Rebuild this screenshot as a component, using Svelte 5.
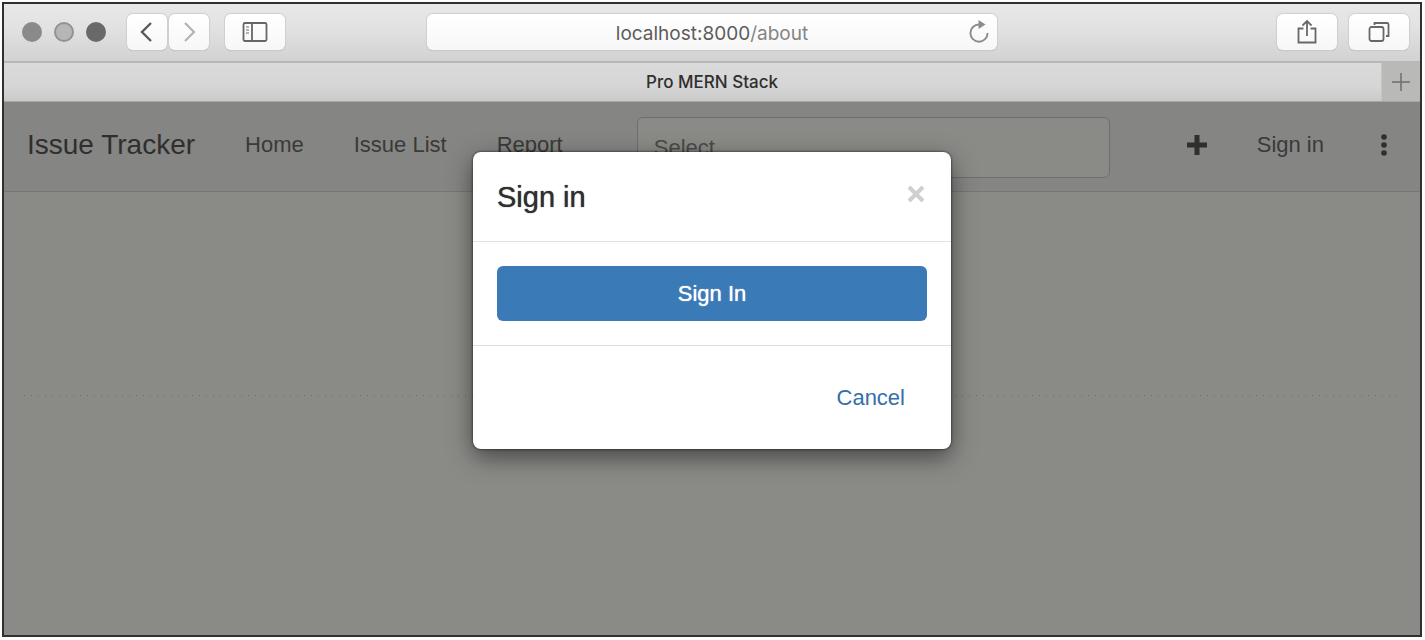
<script>
  let open = $state(true);
</script>

<div class="window">
  <header class="toolbar">
    <div class="group">
      <div class="lights"><span></span><span class="mid"></span><span class="dark"></span></div>
      <div class="history">
        <button class="tool narrow" aria-label="Back">
          <svg width="24" height="24" viewBox="0 0 24 24" stroke="#5a5a5a" stroke-width="2.4"><path d="M16 3 7 12l9 9" /></svg>
        </button>
        <button class="tool narrow" aria-label="Forward">
          <svg width="24" height="24" viewBox="0 0 24 24" stroke="#b4b4b4" stroke-width="2.2"><path d="M8 3l9 9-9 9" /></svg>
        </button>
      </div>
      <button class="tool" aria-label="Sidebar">
        <svg width="26" height="22" viewBox="0 0 26 22" stroke="#666" stroke-width="1.8"><rect x="1.5" y="2" width="23" height="18" rx="1.5" /><path d="M10 2v18" /><path d="M4 6h3M4 9h3M4 12h3" stroke="#999" stroke-width="1.3" /></svg>
      </button>
    </div>
    <div class="address">
      <span class="url">localhost:8000<span>/about</span></span>
      <button class="reload" aria-label="Reload">
        <svg width="22" height="24" viewBox="0 0 22 24" stroke="#8c8c8c" stroke-width="1.9"><path d="M12 4.500H11a8.600 8.600 0 1 0 8.600 8.600" /><path d="M10.500 0v9l7-4.500z" fill="#8c8c8c" stroke="none" /></svg>
      </button>
    </div>
    <div class="group end">
      <button class="tool" aria-label="Share">
        <svg width="22" height="28" viewBox="0 0 22 28" stroke="#686868" stroke-width="1.8"><path d="M7.500 10.500H2.500v14h17v-14h-5M11 18V3M6.500 7.500 11 3l4.500 4.500" /></svg>
      </button>
      <button class="tool" aria-label="Show all tabs">
        <svg width="24" height="24" viewBox="0 0 24 24" stroke="#686868" stroke-width="1.8"><rect x="2.500" y="7" width="14" height="14" rx="2" /><path d="M7.500 5V3H20a1.500 1.500 0 0 1 1.500 1.500V16H19" /></svg>
      </button>
    </div>
  </header>

  <div class="tabs">
    <div class="tab">Pro MERN Stack</div>
    <button class="new-tab" aria-label="New tab">
      <svg width="20" height="20" viewBox="0 0 20 20" stroke="#6e6e6e" stroke-width="1.5"><path d="M10 1v18M1 10h18" /></svg>
    </button>
  </div>

  <div class="page">
    <nav>
      <a class="brand" href="#home">Issue Tracker</a>
      <a href="#home">Home</a>
      <a href="#issues">Issue List</a>
      <a href="#report">Report</a>
      <input class="search" type="text" aria-label="Search issues" placeholder="Select..." />
      <div class="right">
        <a href="#new" aria-label="Create issue">
          <svg width="24" height="24" viewBox="0 0 24 24" stroke="#2f2f2e" stroke-width="5"><path d="M12 2v20M2 12h20" /></svg>
        </a>
        <a href="#signin">Sign in</a>
        <a href="#more" aria-label="More">
          <svg width="24" height="24" viewBox="0 0 24 24"><g fill="#2f2f2e"><circle cx="12" cy="4" r="2.8" /><circle cx="12" cy="12" r="2.8" /><circle cx="12" cy="20" r="2.8" /></g></svg>
        </a>
      </div>
    </nav>
    <hr />

    {#if open}
      <div class="overlay">
        <div class="modal" role="dialog" aria-modal="true" aria-labelledby="title">
          <div class="head">
            <h4 id="title">Sign in</h4>
            <button class="close" aria-label="Close" onclick={() => (open = false)}>
              <svg width="18" height="18" viewBox="0 0 18 18" stroke="#cfcfcf" stroke-width="4"><path d="M2 2l14 14M16 2 2 16" /></svg>
            </button>
          </div>
          <div class="body"><button class="primary">Sign In</button></div>
          <div class="foot"><button class="link" onclick={() => (open = false)}>Cancel</button></div>
        </div>
      </div>
    {/if}
  </div>
</div>

<style>
  :global(body) { margin: 0; background: #fdfdfd; }
  * { box-sizing: border-box; }
  button { padding: 0; border: 0; background: none; font: inherit; color: inherit; }
  svg { display: block; fill: none; }
  .window {
    display: flex;
    flex-direction: column;
    min-height: calc(100vh - 5px);
    margin: 2px 3px 3px 2px;
    border: 2px solid #30312f;
    font-family: "Liberation Sans", Arial, sans-serif;
    font-size: 22px;
  }
  .toolbar {
    display: grid;
    grid-template-columns: 1fr minmax(0, 570px) 1fr;
    align-items: center;
    height: 59px;
    padding: 0 11px 2px;
    border-bottom: 2px solid #b8b8b8;
    background: linear-gradient(#e8e8e8, #e2e2e2 40%, #d2d2d2);
  }
  .group { display: flex; align-items: center; gap: 16px; }
  .group.end { justify-content: flex-end; gap: 12px; }
  .lights { display: flex; gap: 12px; margin: 0 5px 0 7px; }
  .lights span { width: 20px; height: 20px; border-radius: 50%; background: #8a8a88; }
  .lights .mid { background: #b6b6b5; border: 2px solid #929290; }
  .lights .dark { background: #696968; }
  .history { display: flex; gap: 2px; }
  .tool {
    display: grid;
    place-items: center;
    width: 60px;
    height: 36px;
    border-radius: 6px;
    background: linear-gradient(#fff, #f7f7f7);
    box-shadow: 0 0 1px 1px #cfcfcf, 0 1px 1px #a8a8a8;
  }
  .narrow { width: 40px; }
  .address {
    display: grid;
    grid-template-columns: 36px 1fr 36px;
    align-items: center;
    height: 36px;
    border-radius: 6px;
    background: linear-gradient(#fff, #f7f7f7);
    box-shadow: 0 0 1px 1px #cfcfcf, 0 1px 1px #a8a8a8;
    font-family: Inter, sans-serif;
    font-size: 19px;
    color: #5c5c5c;
  }
  .url { grid-column: 2; padding-top: 4px; text-align: center; }
  .url span { color: #858585; }
  .reload { display: grid; place-items: center; }
  .tabs {
    display: flex;
    height: 39px;
    border-bottom: 1px solid #a6a6a5;
    background: linear-gradient(#dadada, #d6d6d6 60%, #cacaca);
    font-family: Inter, sans-serif;
    font-size: 17px;
    font-weight: 500;
    color: #2f2f2f;
  }
  .tab { flex: 1; display: grid; place-items: center; padding-left: 39px; }
  .new-tab { display: grid; place-items: center; width: 39px; border-left: 1px solid #c6c6c5; background: #b9b9b7; }
  .page { position: relative; flex: 1; background: #8a8a87; }
  nav {
    display: flex;
    align-items: center;
    height: 90px;
    padding-bottom: 4px;
    border-bottom: 1px solid #767674;
    background: #858583;
  }
  nav > a { padding: 0 25px; }
  nav a { line-height: 28px; color: #3a3a39; text-decoration: none; white-space: nowrap; }
  nav .brand { padding-left: 23px; font-size: 28px; color: #2f2f2e; }
  .search {
    flex: 0 1 473px;
    min-width: 0;
    height: 61px;
    margin: 6px 24px 0 49px;
    padding: 0 16px;
    border: 1px solid #6e6e6c;
    border-radius: 6px;
    background: #8a8a87;
    font: inherit;
  }
  .search::placeholder { color: #4a4a49; opacity: 1; }
  .right { display: flex; align-items: center; margin-left: auto; }
  .right a { padding: 0 24px; }
  hr {
    height: 1px;
    margin: 203px 18px 0 20px;
    border: 0;
    background: repeating-linear-gradient(90deg, #6c6c6a 0 1px, #8a8a87 1px 7px);
  }
  .overlay { position: absolute; inset: 0; display: flex; justify-content: center; align-items: flex-start; padding: 50px 20px; }
  .modal {
    width: 478px;
    border-radius: 8px;
    background: #fff;
    box-shadow: 0 0 2px 1px rgba(0, 0, 0, .35), 0 8px 24px rgba(0, 0, 0, .5);
  }
  .head { display: flex; justify-content: space-between; align-items: center; height: 90px; padding: 0 26px 0 24px; border-bottom: 1px solid #e2e2e2; }
  h4 { margin: 0; font-size: 29px; font-weight: 400; line-height: 40px; color: #303030; text-shadow: 0 0 1px #303030; }
  .close { padding-bottom: 6px; }
  .body { padding: 24px; border-bottom: 1px solid #dedede; }
  .primary { display: block; width: 100%; height: 55px; border-radius: 6px; background: #3a7ab7; color: #fff; text-shadow: 0 0 1px #fff; }
  .foot { display: flex; justify-content: flex-end; padding: 24px; }
  .link { height: 55px; padding: 0 22px; color: #356fa8; }
</style>
